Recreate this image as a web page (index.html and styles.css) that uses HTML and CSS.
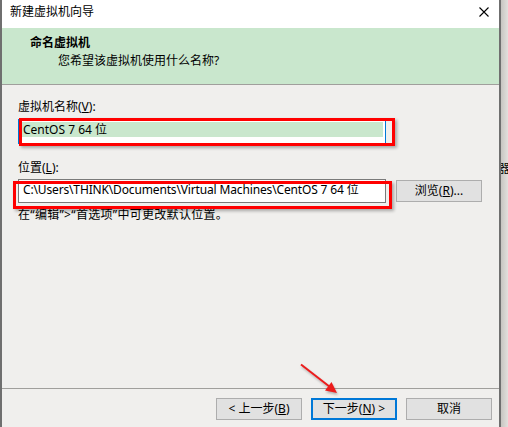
FILE: index.html
```html
<!DOCTYPE html>
<html lang="zh-CN">
<head>
<meta charset="utf-8">
<title>新建虚拟机向导</title>
<link rel="stylesheet" href="styles.css">
</head>
<body>
<div class="window">
  <div class="titlebar">
    <span class="title">新建虚拟机向导</span>
    <svg class="close" width="10" height="10" viewBox="0 0 10 10"><path d="M0.5 0.5 L9.5 9.5 M9.5 0.5 L0.5 9.5" stroke="#000" stroke-width="1.1" fill="none"/></svg>
  </div>
  <div class="header">
    <div class="h-title">命名虚拟机</div>
    <div class="h-sub">您希望该虚拟机使用什么名称?</div>
  </div>
  <div class="content">
    <div class="label l-name">虚拟机名称(<u>V</u>):</div>
    <div class="input focused"><div class="sel">CentOS 7 64 位</div></div>
    <div class="label l-loc">位置(<u>L</u>):</div>
    <div class="loc-row">
      <div class="input path">C:\Users\THINK\Documents\Virtual Machines\CentOS 7 64 位</div>
      <div class="btn browse">浏览(<u>R</u>)...</div>
    </div>
    <div class="hint">在“编辑”&gt;“首选项”中可更改默认位置。</div>
  </div>
  <div class="footer">
    <div class="btn">&lt; 上一步(<u>B</u>)</div>
    <div class="btn primary">下一步(<u>N</u>) &gt;</div>
    <div class="btn">取消</div>
  </div>
</div>
<div class="strip"><span class="glyph">器</span></div>

<div class="mark mark-name"></div>
<div class="mark mark-loc"></div>
<svg class="arrow" width="60" height="50" viewBox="0 0 60 50">
  <g transform="translate(-290,-355)">
    <line x1="301" y1="364.5" x2="330" y2="387" stroke="#ec1c1c" stroke-width="2"/>
    <path d="M337 393 L325 390.5 L331.5 382 Z" fill="#ec1c1c"/>
  </g>
</svg>
</body>
</html>
```
FILE: styles.css
```css
* { box-sizing: border-box; }
html, body { margin: 0; padding: 0; }
body {
  position: relative;
  width: 508px;
  height: 427px;
  display: flex;
  overflow: hidden;
  font-family: "Noto Sans", "Noto Sans CJK SC", sans-serif;
  font-size: 12px;
  color: #000;
  background: #f0efed;
}
u { text-decoration: underline; text-underline-offset: 1px; }

.window {
  width: 501px;
  height: 427px;
  display: flex;
  flex-direction: column;
  border-left: 2px solid #6f6f6f;
  border-right: 2px solid #6f6f6f;
  background: #f0efed;
}
.titlebar {
  height: 28px;
  background: #fff;
  display: flex;
  align-items: center;
  justify-content: space-between;
  padding: 0 10px 4px 8px;
}
.title { line-height: 16px; }
.header {
  height: 57px;
  background: #c9e7cd;
  border-bottom: 1px solid #a09f9c;
  padding: 6px 0 0 28px;
  line-height: 18px;
}
.h-title { font-weight: bold; }
.h-sub { padding-left: 28px; }

.content {
  flex: 1;
  padding: 14px 0 0 16px;
}
.label { line-height: 16px; }
.l-loc { margin-top: 16px; }
.input {
  width: 368px;
  height: 25px;
  background: #fff;
  margin-top: 4px;
}
.focused {
  border: 1px solid #0078d7;
  padding: 2px 2px 0 2px;
}
.sel {
  background: #c9e7cd;
  height: 15px;
  line-height: 15px;
  padding-left: 2px;
}
.loc-row {
  display: flex;
  align-items: flex-start;
  gap: 10px;
  margin-top: 3px;
}
.path {
  margin-top: 0;
  height: 24px;
  border: 1px solid #7a7a7a;
  padding: 0 0 0 4px;
  line-height: 20px;
  letter-spacing: -0.15px;
  white-space: nowrap;
  overflow: hidden;
}
.btn {
  width: 86px;
  height: 22px;
  background: #e1e1e1;
  border: 1px solid #adadad;
  display: flex;
  align-items: center;
  justify-content: center;
  line-height: 16px;
}
.browse { margin-top: 1px; }
.hint { margin-top: 4px; line-height: 16px; letter-spacing: 0.3px; }

.footer {
  border-top: 1px solid #a09f9c;
  height: 39px;
  display: flex;
  justify-content: flex-end;
  align-items: flex-start;
  gap: 9px;
  padding: 9px 7px 0 0;
}
.primary { border: 2px solid #0078d7; }

.strip {
  flex: 1;
  background: linear-gradient(to right, #c7c5c1, #e2e0dd);
  overflow: hidden;
  position: relative;
}
.glyph {
  position: absolute;
  left: -3px;
  top: 162px;
  font-size: 12px;
  line-height: 14px;
}

.mark {
  position: absolute;
  border: 3px solid #ff0000;
  box-shadow: 2px 2px 3px rgba(0,0,0,0.3);
}
.mark-name { left: 19px; top: 118px; width: 376px; height: 28px; }
.mark-loc { left: 13px; top: 181px; width: 379px; height: 28px; }
.arrow {
  position: absolute;
  left: 290px;
  top: 355px;
  filter: drop-shadow(1px 2px 1px rgba(0,0,0,0.25));
}
```
